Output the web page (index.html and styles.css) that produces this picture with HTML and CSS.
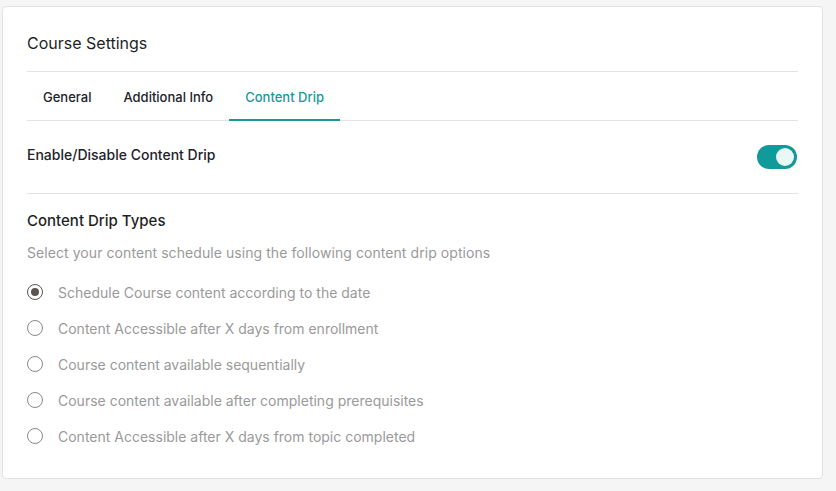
FILE: index.html
```html
<!DOCTYPE html>
<html lang="en">
<head>
    <title>Course Settings</title>
    <link rel="stylesheet" href="styles.css">
</head>
<body>
    <div class="card">
        <h1 class="card-title">Course Settings</h1>

        <div class="tabs">
            <div class="tab">General</div>
            <div class="tab">Additional Info</div>
            <div class="tab active">Content Drip</div>
        </div>

        <div class="toggle-row">
            <span class="toggle-label">Enable/Disable Content Drip</span>
            <label class="switch">
                <input type="checkbox" checked>
                <span class="slider"></span>
            </label>
        </div>

        <div class="drip-types">
            <h2>Content Drip Types</h2>
            <p class="hint">Select your content schedule using the following content drip options</p>

            <label class="radio-row">
                <input type="radio" name="drip" checked>
                <span class="radio"></span>
                Schedule Course content according to the date
            </label>
            <label class="radio-row">
                <input type="radio" name="drip">
                <span class="radio"></span>
                Content Accessible after X days from enrollment
            </label>
            <label class="radio-row">
                <input type="radio" name="drip">
                <span class="radio"></span>
                Course content available sequentially
            </label>
            <label class="radio-row">
                <input type="radio" name="drip">
                <span class="radio"></span>
                Course content available after completing prerequisites
            </label>
            <label class="radio-row">
                <input type="radio" name="drip">
                <span class="radio"></span>
                Content Accessible after X days from topic completed
            </label>
        </div>
    </div>
</body>
</html>
```

FILE: styles.css
```css
/* page */
body {
    font-family: Inter, "Noto Sans", Arial, sans-serif;
    background-color: #f5f5f5;
    margin: 0;
    padding: 6px 13px 0 2px;
    color: #1f1f24;
}

.card {
    background-color: #fff;
    border: 1px solid #e2e2e2;
    border-radius: 4px;
    padding: 24px 24px 24px 24px;
}

.card-title {
    font-size: 16px;
    font-weight: 400;
    line-height: 24px;
    margin: 0;
    padding-bottom: 16px;
    border-bottom: 1px solid #e3e3e3;
}

/* tabs */
.tabs {
    display: flex;
    border-bottom: 1px solid #e3e3e3;
}

.tab {
    font-size: 13px;
    font-weight: 500;
    line-height: 50px;
    height: 48px;
    padding: 0 16px;
    color: #22222a;
    cursor: pointer;
}

.tab.active {
    color: #17999a;
    border-bottom: 2px solid #17999a;
    height: 47px;
    margin-bottom: -1px;
}

/* toggle row */
.toggle-row {
    display: flex;
    justify-content: space-between;
    align-items: flex-start;
    padding: 24px 0 24px 0;
    border-bottom: 1px solid #e3e3e3;
}

.toggle-label {
    font-size: 14px;
    font-weight: 500;
    line-height: 20px;
    color: #22222a;
}

.switch {
    position: relative;
    width: 40px;
    height: 24px;
    display: inline-block;
    margin-right: 1px;
}

.switch input {
    display: none;
}

.slider {
    position: absolute;
    inset: 0;
    background-color: #ccc;
    border-radius: 12px;
    cursor: pointer;
}

.slider::before {
    content: "";
    position: absolute;
    width: 18px;
    height: 18px;
    top: 3px;
    left: 3px;
    border-radius: 50%;
    background-color: #e9f7f7;
}

.switch input:checked + .slider {
    background-color: #109a99;
}

.switch input:checked + .slider::before {
    left: 19px;
}

/* drip types */
.drip-types {
    padding-top: 17px;
}

.drip-types h2 {
    font-size: 15px;
    font-weight: 500;
    line-height: 20px;
    margin: 0;
}

.hint {
    font-size: 14px;
    line-height: 20px;
    color: #9a9a9a;
    letter-spacing: 0.07px;
    margin: 12px 0 11px 0;
}

.radio-row {
    display: flex;
    align-items: center;
    height: 36px;
    font-size: 14px;
    color: #9a9a9a;
    cursor: pointer;
}

.radio-row input {
    display: none;
}

.radio {
    box-sizing: border-box;
    width: 16px;
    height: 16px;
    border: 1.5px solid #8a8a8a;
    border-radius: 50%;
    margin-right: 15px;
    display: flex;
    align-items: center;
    justify-content: center;
}

.radio-row input:checked + .radio {
    border-color: #5a5552;
}

.radio-row input:checked + .radio::after {
    content: "";
    width: 8px;
    height: 8px;
    border-radius: 50%;
    background-color: #5a5552;
}
```
